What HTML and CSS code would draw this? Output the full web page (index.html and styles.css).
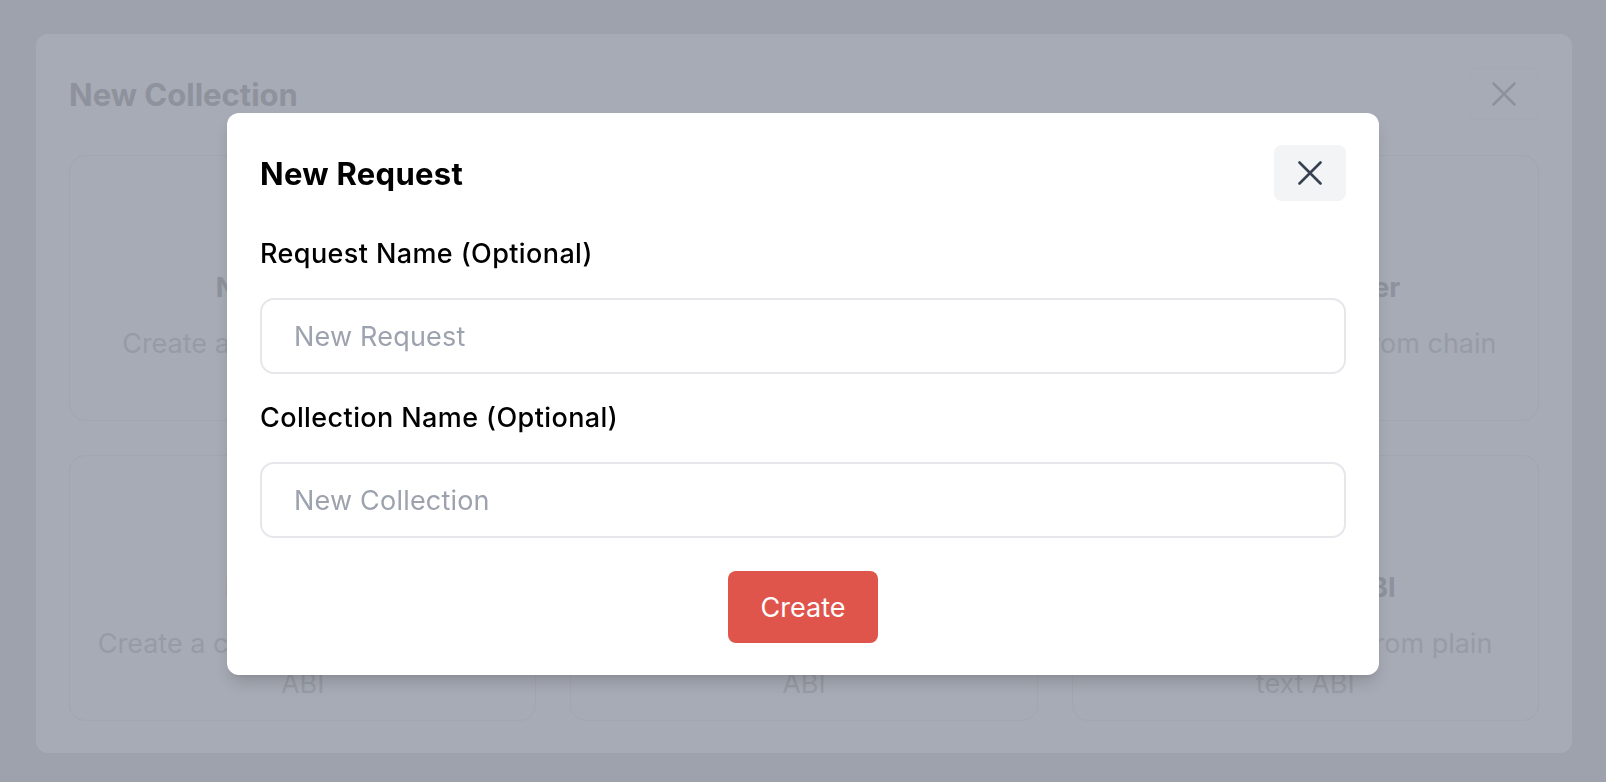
FILE: index.html
```html
<!DOCTYPE html>
<html lang="en">
<head>
  <meta charset="UTF-8">
  <meta name="viewport" content="width=device-width, initial-scale=1.0">
  <title>New Request</title>
  <link rel="stylesheet" href="styles.css">
</head>
<body>
  <div class="page">
    <section class="collection-modal">
      <div class="collection-header">
        <h2>New Collection</h2>
        <button class="ghost-close" type="button" aria-label="Close">
          <svg width="24" height="24" viewBox="0 0 24 24" fill="none" stroke="currentColor" stroke-width="2.5" stroke-linecap="round">
            <path d="M1.5 1.5l21 21M22.5 1.5l-21 21"/>
          </svg>
        </button>
      </div>
      <div class="option-grid">
        <div class="option-card">
          <div class="option-icon"></div>
          <h3>New Request</h3>
          <p>Create a new empty request</p>
        </div>
        <div class="option-card">
          <div class="option-icon"></div>
          <h3>From Contract</h3>
          <p>Create a collection from address</p>
        </div>
        <div class="option-card">
          <div class="option-icon"></div>
          <h3>Block Explorer</h3>
          <p>Create a collection from chain</p>
        </div>
        <div class="option-card">
          <div class="option-icon"></div>
          <h3>Import Files</h3>
          <p>Create a collection from a JSON ABI</p>
        </div>
        <div class="option-card">
          <div class="option-icon"></div>
          <h3>Upload JSON</h3>
          <p>Create a collection from JSON ABI</p>
        </div>
        <div class="option-card">
          <div class="option-icon"></div>
          <h3>Plain Text ABI</h3>
          <p>Create a collection from plain text ABI</p>
        </div>
      </div>
    </section>
  </div>

  <div class="overlay">
    <div class="dialog">
      <div class="dialog-header">
        <h2>New Request</h2>
        <button class="close-btn" type="button" aria-label="Close">
          <svg width="24" height="24" viewBox="0 0 24 24" fill="none" stroke="currentColor" stroke-width="2.6" stroke-linecap="round">
            <path d="M1.5 1.5l21 21M22.5 1.5l-21 21"/>
          </svg>
        </button>
      </div>
      <form class="dialog-form" onsubmit="return false">
        <label for="requestName">Request Name (Optional)</label>
        <input type="text" id="requestName" placeholder="New Request">
        <label for="collectionName">Collection Name (Optional)</label>
        <input type="text" id="collectionName" placeholder="New Collection">
        <div class="actions">
          <button class="create-btn" type="submit">Create</button>
        </div>
      </form>
    </div>
  </div>
</body>
</html>
```

FILE: styles.css
```css
body {
  margin: 0;
  height: 100vh;
  overflow: hidden;
  background-color: #9ea2ad;
  font-family: Inter, "Noto Sans", sans-serif;
}

.page {
  padding: 34px 34px 0 36px;
}

.collection-modal {
  background-color: #a7abb5;
  border-radius: 12px;
  padding: 33px 33px 32px 33px;
}

.collection-header {
  display: flex;
  justify-content: space-between;
  align-items: center;
  height: 54px;
  margin-bottom: 34px;
}

.collection-header h2 {
  margin: 0;
  font-size: 31px;
  font-weight: 700;
  color: #8e929c;
}

.ghost-close {
  width: 70px;
  height: 52px;
  border: 1px solid #a5a9b3;
  border-radius: 8px;
  background: transparent;
  color: #8e929c;
  display: flex;
  align-items: center;
  justify-content: center;
  padding: 0;
}

.option-grid {
  display: grid;
  grid-template-columns: repeat(3, 1fr);
  grid-auto-rows: 266px;
  gap: 34px;
}

.option-card {
  border: 1.5px solid #a2a6b0;
  border-radius: 16px;
  padding: 32px 20px 0;
  text-align: center;
}

.option-icon {
  width: 64px;
  height: 64px;
  margin: 0 auto 16px;
  border-radius: 12px;
  background: #a2a6b0;
}

.option-card h3 {
  margin: 0 0 16px;
  font-size: 27px;
  line-height: 40px;
  font-weight: 700;
  color: #8e929c;
}

.option-card p {
  margin: 0;
  font-size: 27px;
  line-height: 40px;
  color: #979ba5;
}

.overlay {
  position: fixed;
  inset: 0;
  display: flex;
  justify-content: center;
  align-items: flex-start;
  padding-top: 113px;
}

.dialog {
  width: 1152px;
  box-sizing: border-box;
  background: #fff;
  border-radius: 12px;
  padding: 32px 33px;
  box-shadow: 0 10px 15px -3px rgba(0, 0, 0, 0.15), 0 4px 6px -4px rgba(0, 0, 0, 0.1);
}

.dialog-header {
  display: flex;
  justify-content: space-between;
  align-items: center;
  height: 56px;
  margin-bottom: 37px;
}

.dialog-header h2 {
  margin: 0;
  font-size: 31px;
  font-weight: 700;
  letter-spacing: 0.3px;
  color: #000;
}

.close-btn {
  width: 72px;
  height: 56px;
  border: none;
  border-radius: 8px;
  background: #f3f4f6;
  color: #374151;
  display: flex;
  align-items: center;
  justify-content: center;
  padding: 0;
}

.dialog-form {
  display: flex;
  flex-direction: column;
  gap: 28px;
}

.dialog-form label {
  font-size: 27px;
  line-height: 32px;
  font-weight: 500;
  letter-spacing: 0.4px;
  color: #000;
}

.dialog-form input {
  height: 76px;
  box-sizing: border-box;
  border: 2px solid #e5e7eb;
  border-radius: 14px;
  padding: 0 32px;
  font-family: inherit;
  font-size: 27px;
  letter-spacing: 0.2px;
  color: #111827;
  outline: none;
}

.dialog-form input::placeholder {
  color: #9ca3af;
}

.actions {
  display: flex;
  justify-content: center;
  margin-top: 5px;
}

.create-btn {
  width: 150px;
  height: 72px;
  border: none;
  border-radius: 8px;
  background: #df544b;
  color: #fff;
  font-family: inherit;
  font-size: 27px;
  font-weight: 400;
}
```
